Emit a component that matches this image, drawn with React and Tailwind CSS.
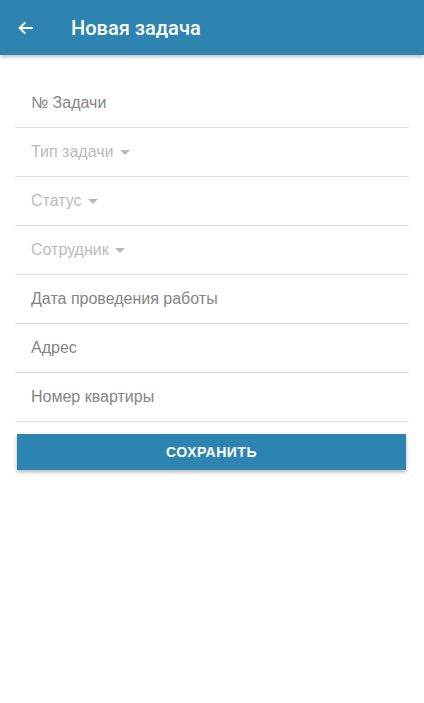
import { useState } from "react";

const fields = [
  { key: "number", label: "№ Задачи", select: false },
  { key: "type", label: "Тип задачи", select: true },
  { key: "status", label: "Статус", select: true },
  { key: "employee", label: "Сотрудник", select: true },
  { key: "date", label: "Дата проведения работы", select: false },
  { key: "address", label: "Адрес", select: false },
  { key: "flat", label: "Номер квартиры", select: false },
];

const Caret = () => (
  <svg width="10" height="5" viewBox="0 0 10 5" className="ml-[6px] mt-[1px]">
    <path d="M0 0h10L5 5z" fill="#b8b8b8" />
  </svg>
);

const App = () => {
  const [values, setValues] = useState({});

  const handleChange = (field, value) => {
    setValues((prev) => ({ ...prev, [field]: value }));
  };

  return (
    <div className="min-h-[703px] bg-white font-['Liberation_Sans',Arial,sans-serif]">
      <header className="h-[55px] bg-[#2d84b0] flex items-center shadow-[0_2px_4px_rgba(0,0,0,0.25)] relative">
        <button className="w-[54px] h-full flex items-center pl-[17px] text-white">
          <svg width="18" height="18" viewBox="0 0 24 24" fill="none" stroke="white" strokeWidth="2.6">
            <path d="M21 12H4M11 4.5L3.5 12L11 19.5" />
          </svg>
        </button>
        <h1 className="ml-[17px] text-white text-[20px] font-medium font-['Roboto',sans-serif]">Новая задача</h1>
      </header>

      <div className="px-[15px] pt-[24px]">
        {fields.map((f) => (
          <div key={f.key} className="h-[49px] flex items-center px-4 border-b border-[#dedede]">
            {f.select ? (
              <div className="flex items-center text-[16px] text-[#bbbbbb]">
                {f.label}
                <Caret />
              </div>
            ) : (
              <input
                type="text"
                placeholder={f.label}
                value={values[f.key] || ""}
                onChange={(e) => handleChange(f.key, e.target.value)}
                className="w-full bg-transparent outline-none text-[16px] text-[#757575] placeholder:text-[#858585]"
              />
            )}
          </div>
        ))}

        <button className="mt-3 ml-[2px] w-[389px] h-9 bg-[#2d84b0] text-white text-[14px] font-bold tracking-[0.5px] uppercase shadow-[0_2px_4px_rgba(0,0,0,0.3)]">
          Сохранить
        </button>
      </div>
    </div>
  );
};

export default App;
